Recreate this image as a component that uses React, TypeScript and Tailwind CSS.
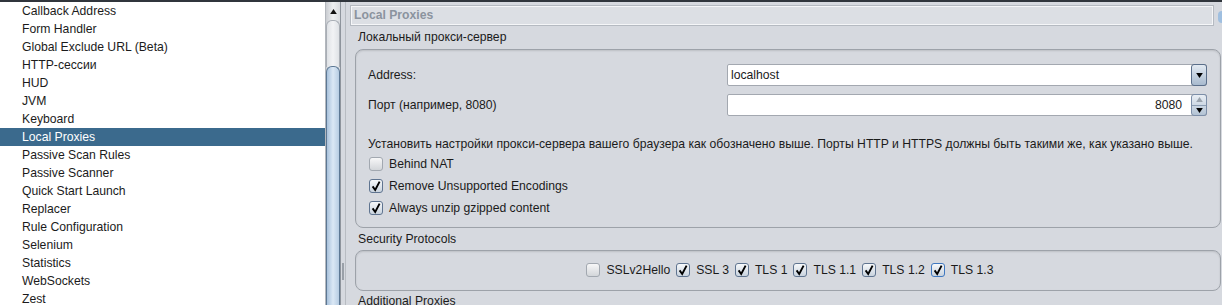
import React from "react"

const options = [
  "Callback Address",
  "Form Handler",
  "Global Exclude URL (Beta)",
  "HTTP-сессии",
  "HUD",
  "JVM",
  "Keyboard",
  "Local Proxies",
  "Passive Scan Rules",
  "Passive Scanner",
  "Quick Start Launch",
  "Replacer",
  "Rule Configuration",
  "Selenium",
  "Statistics",
  "WebSockets",
  "Zest",
]

const protocols = [
  { name: "SSLv2Hello", on: false },
  { name: "SSL 3", on: true },
  { name: "TLS 1", on: true },
  { name: "TLS 1.1", on: true },
  { name: "TLS 1.2", on: true },
  { name: "TLS 1.3", on: true, focus: true },
]

const Check = ({ on, focus }: { on: boolean; focus?: boolean }) => (
  <span
    className={
      "relative w-[14px] h-[14px] shrink-0 rounded-[3px] border " +
      (focus
        ? "border-[#3f78c0] bg-gradient-to-b from-[#f7f9fb] to-[#c9d3de]"
        : on
          ? "border-[#5f7490] bg-gradient-to-b from-[#f7f9fb] to-[#c9d3de]"
          : "border-[#a2a8b0] bg-gradient-to-b from-[#f7f7f8] to-[#d3d6da]")
    }
  >
    {on && (
      <svg viewBox="0 0 14 14" className="absolute left-[-1px] top-[-1px] w-[14px] h-[14px]">
        <path d="M3.6 7.4 L6.2 11 L10.6 2.6" fill="none" stroke="#000" strokeWidth="1.9" strokeLinejoin="miter" />
      </svg>
    )}
  </span>
)

const Arrow = ({ up, color = "#000" }: { up?: boolean; color?: string }) => (
  <svg viewBox="0 0 8 6" className="w-[7px] h-[5px]">
    <path d={up ? "M0 6 L4 0 L8 6 Z" : "M0 0 L8 0 L4 6 Z"} fill={color} />
  </svg>
)

export default function App() {
  return (
    <div className="w-[1222px] h-[305px] overflow-hidden flex flex-col bg-[#d6d9df] text-[#1b1b1b] text-[12.2px] font-['Liberation_Sans',Arial,sans-serif]">
      <div className="h-[2px] shrink-0 bg-[#30353c]" />
      <div className="flex flex-1 min-h-0">
        {/* option tree */}
        <ul className="w-[325px] shrink-0 bg-white">
          {options.map(o => (
            <li
              key={o}
              className={
                "h-[18px] leading-[18px] pl-[22px] whitespace-nowrap " +
                (o === "Local Proxies" ? "bg-[#3b6a8d] text-white" : "")
              }
            >
              {o}
            </li>
          ))}
        </ul>

        {/* scrollbar */}
        <div className="w-[15px] shrink-0 flex flex-col bg-gradient-to-r from-[#c9ccd1] via-[#eef0f2] to-[#d9dce0] border-l border-[#b3b7bd]">
          <div className="h-[18px] shrink-0 flex items-start justify-center pt-[7px]">
            <Arrow up color="#111" />
          </div>
          <div className="h-[47px] shrink-0 rounded-t-[6px] border-t border-x border-[#a9aeb5] bg-gradient-to-r from-[#dfe2e6] via-[#f2f3f5] to-[#dfe2e6]" />
          <div className="flex-1 -mt-[1px] rounded-t-[6px] border-t border-x border-[#5d7894] bg-gradient-to-r from-[#a9c2dc] via-[#dbe8f5] to-[#b7cde3]" />
        </div>

        {/* split divider */}
        <div className="w-[5px] shrink-0 flex flex-col justify-end pb-[25px] items-center bg-[#d6d9df] border-l border-[#8e949c]">
          <div className="w-[2px] h-[17px] border-x border-[#9aa0a8] bg-[#eef0f2]" />
        </div>

        {/* options panel */}
        <main className="flex-1 min-w-0 flex flex-col border-l border-[#b8bcc2] pt-[3px]">
          <div className="shrink-0 flex items-center">
            <div className="flex-1 ml-[4px] mr-[4px] h-[21px] flex items-center pl-[3px] border border-[#b5bac1] shadow-[inset_0_0_0_1px_#f5f6f8] bg-[#dcdfe4] font-bold text-[#8b939e]">
              Local Proxies
            </div>
            <div className="w-[4px] h-[12px] rounded-l-full bg-[#9fbfe0] mt-[2px]" />
          </div>

          <div className="shrink-0 h-[23px] flex items-center pl-[12px]">Локальный прокси-сервер</div>

          <section className="shrink-0 ml-[9px] mr-[1px] h-[179px] rounded-[8px] border border-[#9da2a9] shadow-[inset_0_1px_2px_rgba(0,0,0,0.12)] flex flex-col pt-[14px] pl-[12px] pr-[13px]">
            <div className="h-[22px] shrink-0 flex items-center">
              <span className="w-[359px] shrink-0">Address:</span>
              <div className="flex-1 h-[22px] flex border border-[#a3a8b0] rounded-[2px] bg-white">
                <span className="flex-1 flex items-center pl-[3px]">localhost</span>
                <span className="w-[16px] my-[-1px] mr-[-1px] flex items-center justify-center rounded-[3px] border border-[#5a6e8a] bg-gradient-to-b from-[#e3eaf2] to-[#a8bace]">
                  <Arrow />
                </span>
              </div>
            </div>
            <div className="h-[22px] shrink-0 mt-[8px] flex items-center">
              <span className="w-[359px] shrink-0">Порт (например, 8080)</span>
              <div className="flex-1 h-[22px] flex border border-[#a3a8b0] rounded-[2px] bg-white">
                <span className="flex-1 flex items-center justify-end pr-[9px]">8080</span>
                <span className="w-[16px] my-[-1px] mr-[-1px] flex flex-col rounded-[3px] border border-[#7c8ea8] bg-gradient-to-b from-[#e9eef4] to-[#b3c3d4] overflow-hidden">
                  <span className="flex-1 flex items-center justify-center border-b border-[#8c9db3]">
                    <Arrow up color="#9aa3ad" />
                  </span>
                  <span className="flex-1 flex items-center justify-center">
                    <Arrow />
                  </span>
                </span>
              </div>
            </div>
            <div className="h-[18px] shrink-0 mt-[19px] flex items-center whitespace-nowrap">
              Установить настройки прокси-сервера вашего браузера как обозначено выше. Порты HTTP и HTTPS должны быть такими же, как указано выше.
            </div>
            {[
              { label: "Behind NAT", on: false },
              { label: "Remove Unsupported Encodings", on: true },
              { label: "Always unzip gzipped content", on: true },
            ].map(c => (
              <label key={c.label} className="h-[22px] shrink-0 flex items-center gap-[6px] pl-[1px]">
                <Check on={c.on} />
                <span>{c.label}</span>
              </label>
            ))}
          </section>

          <div className="shrink-0 h-[22px] flex items-center pl-[12px]">Security Protocols</div>

          <section className="shrink-0 ml-[9px] mr-[1px] h-[41px] rounded-[8px] border border-[#9da2a9] shadow-[inset_0_1px_2px_rgba(0,0,0,0.12)] flex items-center justify-center pl-[4px]">
            <div className="flex items-center gap-[6px]">
              {protocols.map(p => (
                <label key={p.name} className="flex items-center gap-[6px]">
                  <Check on={p.on} focus={p.focus} />
                  <span>{p.name}</span>
                </label>
              ))}
            </div>
          </section>

          <div className="shrink-0 h-[20px] flex items-center pl-[12px]">Additional Proxies</div>
        </main>
      </div>
    </div>
  )
}
